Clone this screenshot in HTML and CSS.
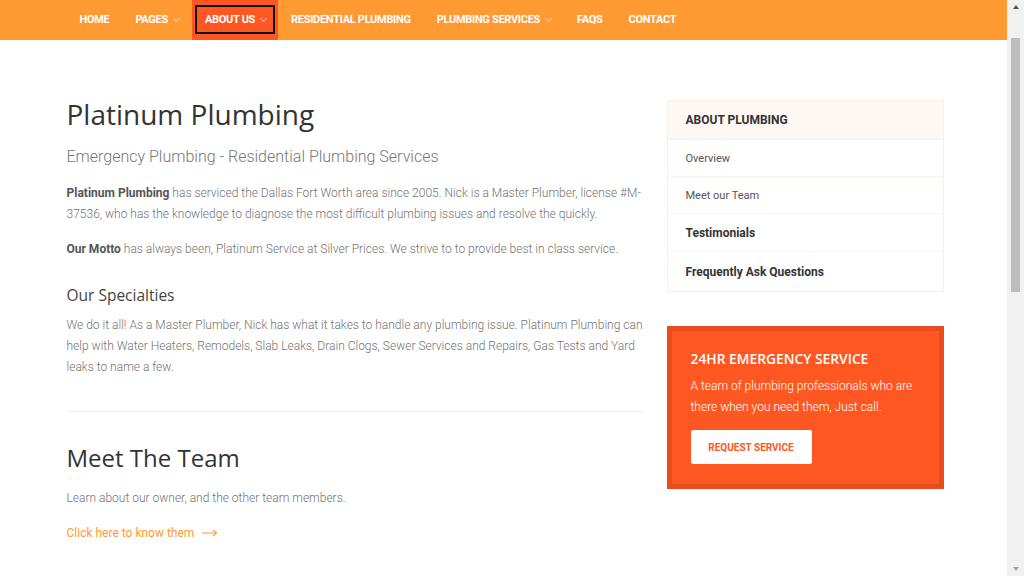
FILE: index.html
```html
<!DOCTYPE html>
<html lang="en">
<head>
	<meta charset="UTF-8">
	<meta name="viewport" content="width=device-width, initial-scale=1.0">
	<title>About Us - Platinum Plumbing</title>
	<link rel="stylesheet" href="styles.css">
</head>
<body>
	<header class="topbar">
		<nav class="nav">
			<a class="nav-item" href="#">Home</a>
			<a class="nav-item" href="#">Pages <span class="caret"></span></a>
			<a class="nav-item active" href="#"><span class="focus">About Us <span class="caret"></span></span></a>
			<a class="nav-item" href="#">Residential Plumbing</a>
			<a class="nav-item" href="#">Plumbing Services <span class="caret"></span></a>
			<a class="nav-item" href="#">FAQs</a>
			<a class="nav-item" href="#">Contact</a>
		</nav>
	</header>

	<div class="page">
		<main class="content">
			<h1 class="title">Platinum Plumbing</h1>
			<p class="lead">Emergency Plumbing - Residential Plumbing Services</p>
			<p><strong>Platinum Plumbing</strong> has serviced the Dallas Fort Worth area since 2005. Nick is a Master Plumber, license #M-37536, who has the knowledge to diagnose the most difficult plumbing issues and resolve the quickly.</p>
			<p><strong>Our Motto</strong> has always been, Platinum Service at Silver Prices. We strive to to provide best in class service.</p>

			<h3 class="sub">Our Specialties</h3>
			<p>We do it all! As a Master Plumber, Nick has what it takes to handle any plumbing issue. Platinum Plumbing can help with Water Heaters, Remodels, Slab Leaks, Drain Clogs, Sewer Services and Repairs, Gas Tests and Yard leaks to name a few.</p>

			<hr class="divider">

			<h2 class="section-title">Meet The Team</h2>
			<p class="team-text">Learn about our owner, and the other team members.</p>
			<a class="more" href="#">Click here to know them
				<svg width="16" height="8" viewBox="0 0 16 8"><path d="M0 4h14.5M11 0.8L14.6 4 11 7.2" fill="none" stroke="currentColor" stroke-width="1.1"/></svg>
			</a>
		</main>

		<aside class="sidebar">
			<div class="side-menu">
				<div class="side-head">About Plumbing</div>
				<a class="side-link" href="#">Overview</a>
				<a class="side-link" href="#">Meet our Team</a>
				<a class="side-link strong" href="#">Testimonials</a>
				<a class="side-link strong last" href="#">Frequently Ask Questions</a>
			</div>

			<div class="emergency">
				<h4>24HR Emergency Service</h4>
				<p>A team of plumbing professionals who are there when you need them, Just call.</p>
				<a class="btn" href="#">Request Service</a>
			</div>
		</aside>
	</div>

	<div class="scrollbar">
		<span class="arrow up"></span>
		<span class="thumb"></span>
		<span class="arrow down"></span>
	</div>
</body>
</html>
```

FILE: styles.css
```css
html {
	overflow: hidden;
}

body {
	margin: 0 17px 0 0;
	font-family: Roboto, "Liberation Sans", sans-serif;
	font-size: 12px;
	font-weight: 300;
	color: #737373;
	background: #fff;
}

a {
	text-decoration: none;
}

/* fake window scrollbar */
.scrollbar {
	position: fixed;
	top: 0;
	right: 0;
	width: 17px;
	height: 100vh;
	background: #f1f1f1;
	display: flex;
	flex-direction: column;
	align-items: center;
}

.scrollbar .thumb {
	width: 9px;
	height: 254px;
	margin-top: 29px;
	background: #bdbdbd;
}

.scrollbar .arrow {
	width: 0;
	height: 0;
	border-left: 3.5px solid transparent;
	border-right: 3.5px solid transparent;
}

.scrollbar .up {
	margin-top: 5px;
	border-bottom: 4px solid #505050;
}

.scrollbar .down {
	margin-top: auto;
	margin-bottom: 5px;
	border-top: 4px solid #a3a3a3;
}

.topbar {
	background-color: #ff9a33;
	height: 40px;
}

.nav {
	width: 877px;
	margin-left: calc(50% - 437px);
	display: flex;
	height: 100%;
}

.nav-item {
	display: flex;
	align-items: center;
	padding: 0 13px 1px;
	color: #fff;
	font-size: 11px;
	font-weight: 700;
	text-transform: uppercase;
	letter-spacing: -0.3px;
}

.nav-item.active {
	background-color: #ff5722;
	padding: 0 4px 1px;
}

.focus {
	display: flex;
	align-items: center;
	height: 25px;
	padding: 0 7px 0 8px;
	border: 1px solid #111;
	outline: 1px solid #111;
}

.caret {
	display: inline-block;
	width: 4px;
	height: 4px;
	margin-left: 6px;
	margin-top: -3px;
	border-right: 1px solid rgba(255, 255, 255, 0.55);
	border-bottom: 1px solid rgba(255, 255, 255, 0.55);
	transform: rotate(45deg);
}

.page {
	width: 877px;
	margin-left: calc(50% - 437px);
	display: grid;
	grid-template-columns: 576px 277px;
	gap: 24px;
	padding-top: 60px;
	align-items: start;
}

.content p {
	margin: 0 0 14px;
	line-height: 21px;
}

.content strong {
	font-weight: 700;
	color: #555;
}

.title {
	font-family: "Open Sans", sans-serif;
	font-weight: 400;
	font-size: 28px;
	color: #333;
	margin: -4px 0 14px;
	line-height: 36px;
}

.content .lead {
	font-size: 16px;
	font-weight: 300;
	color: #777;
	margin-bottom: 15px;
	line-height: 22px;
}

.sub {
	font-family: "Open Sans", sans-serif;
	font-weight: 400;
	font-size: 15.5px;
	color: #444;
	margin: 24px 0 9px;
	line-height: 22px;
}

.divider {
	border: 0;
	border-top: 1px solid #eee;
	margin: 33px 0 30px;
}

.section-title {
	font-family: "Open Sans", sans-serif;
	font-weight: 400;
	font-size: 24px;
	color: #333;
	margin: -1px 0 13px;
	line-height: 34px;
}

.content .team-text {
	margin-bottom: 17px;
}

.more {
	display: inline-flex;
	align-items: center;
	gap: 8px;
	color: #ff9a33;
	font-size: 12px;
	font-weight: 400;
}

.sidebar {
	display: flex;
	flex-direction: column;
	gap: 34px;
}

.side-menu {
	border: 1px solid #fdeee0;
	display: flex;
	flex-direction: column;
}

.side-head {
	background-color: #fdf8f3;
	height: 38px;
	display: flex;
	align-items: center;
	padding: 0 18px;
	font-size: 12px;
	font-weight: 700;
	color: #333;
	text-transform: uppercase;
}

.side-link {
	display: flex;
	align-items: center;
	height: 36px;
	padding: 0 18px;
	border-top: 1px solid #fdf1e6;
	font-size: 11px;
	font-weight: 400;
	color: #555;
}

.side-link.strong {
	font-size: 12px;
	font-weight: 700;
	color: #333;
	height: 37px;
}

.side-link.last {
	height: 39px;
}

.emergency {
	background-color: #ff5722;
	border: 5px solid #e84d1f;
	padding: 18px 19px 20px;
	color: #fff;
}

.emergency h4 {
	font-family: "Open Sans", sans-serif;
	font-size: 13.8px;
	font-weight: 600;
	text-transform: uppercase;
	margin: 0 0 7px;
	line-height: 20px;
}

.emergency p {
	margin: 0 0 12px;
	font-size: 12px;
	line-height: 21px;
}

.btn {
	display: inline-flex;
	align-items: center;
	justify-content: center;
	width: 121px;
	height: 34px;
	background: #fff;
	color: #ff5722;
	font-size: 10px;
	font-weight: 700;
	text-transform: uppercase;
	border-radius: 2px;
}
```
